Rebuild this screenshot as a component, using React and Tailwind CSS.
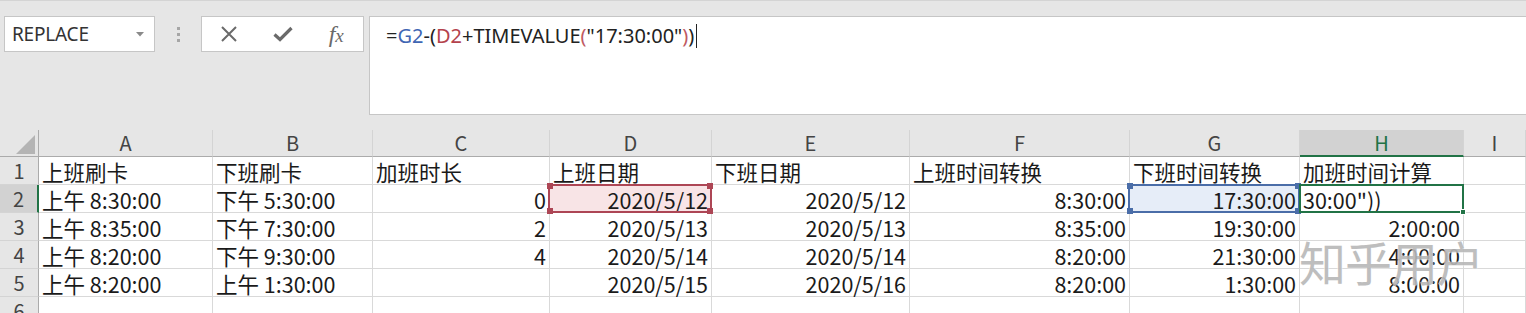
import React from "react";

const COLS = [
  { k: "A", w: 174 },
  { k: "B", w: 160 },
  { k: "C", w: 177 },
  { k: "D", w: 162 },
  { k: "E", w: 198 },
  { k: "F", w: 220 },
  { k: "G", w: 170 },
  { k: "H", w: 164 },
  { k: "I", w: 62 },
];

const ROWS = [
  [["上班刷卡", "l"], ["下班刷卡", "l"], ["加班时长", "l"], ["上班日期", "l"], ["下班日期", "l"], ["上班时间转换", "l"], ["下班时间转换", "l"], ["加班时间计算", "l"], ["", "l"]],
  [["上午 8:30:00", "l"], ["下午 5:30:00", "l"], ["0", "r"], ["2020/5/12", "r"], ["2020/5/12", "r"], ["8:30:00", "r"], ["17:30:00", "r"], ["30:00\"))", "l"], ["", "l"]],
  [["上午 8:35:00", "l"], ["下午 7:30:00", "l"], ["2", "r"], ["2020/5/13", "r"], ["2020/5/13", "r"], ["8:35:00", "r"], ["19:30:00", "r"], ["2:00:00", "r"], ["", "l"]],
  [["上午 8:20:00", "l"], ["下午 9:30:00", "l"], ["4", "r"], ["2020/5/14", "r"], ["2020/5/14", "r"], ["8:20:00", "r"], ["21:30:00", "r"], ["4:00:00", "r"], ["", "l"]],
  [["上午 8:20:00", "l"], ["上午 1:30:00", "l"], ["", "r"], ["2020/5/15", "r"], ["2020/5/16", "r"], ["8:20:00", "r"], ["1:30:00", "r"], ["8:00:00", "r"], ["", "l"]],
  [["", "l"], ["", "l"], ["", "l"], ["", "l"], ["", "l"], ["", "l"], ["", "l"], ["", "l"], ["", "l"]],
];

function Handles({ color }) {
  const base = "absolute w-[6px] h-[6px] z-20";
  return (
    <>
      <div className={`${base} -left-[3px] -top-[3px]`} style={{ background: color }} />
      <div className={`${base} -right-[3px] -top-[3px]`} style={{ background: color }} />
      <div className={`${base} -left-[3px] -bottom-[3px]`} style={{ background: color }} />
      <div className={`${base} -right-[3px] -bottom-[3px]`} style={{ background: color }} />
    </>
  );
}

function Cell({ text, align, w, row, col }) {
  const isD2 = row === 1 && col === 3;
  const isG2 = row === 1 && col === 6;
  const isH2 = row === 1 && col === 7;
  let bg = "bg-white";
  if (isD2) bg = "bg-[#f8e4e6]";
  if (isG2) bg = "bg-[#e6edf8]";
  return (
    <div
      className={`relative h-[28px] shrink-0 border-r border-b border-[#d9d9d9] ${bg} flex items-center ${
        align === "r" ? "justify-end pr-[3px]" : "justify-start pl-[3px]"
      } whitespace-nowrap text-[21.5px] leading-[28px] text-[#1a1a1a]`}
      style={{ width: w }}
    >
      <span className={`relative z-10 pt-[2px] ${isH2 ? "overflow-hidden" : ""}`}>{text}</span>
      {isD2 && (
        <div className="absolute -left-[2px] -top-[1px] -right-[1px] -bottom-[1px] border-2 border-[#ad4655] z-10">
          <Handles color="#ad4655" />
        </div>
      )}
      {isG2 && (
        <div className="absolute -left-[2px] -top-[1px] -right-[1px] -bottom-[1px] border-2 border-[#4a6da8] z-10">
          <Handles color="#4a6da8" />
        </div>
      )}
      {isH2 && (
        <div className="absolute -left-[1px] -top-[1px] -right-[1px] -bottom-[1px] border-2 border-[#217346] z-10">
          <div className="absolute -right-[4px] -bottom-[4px] w-[6px] h-[6px] bg-[#217346] border border-white" />
        </div>
      )}
    </div>
  );
}

export default function App() {
  return (
    <div className="w-[1526px] h-[313px] overflow-hidden bg-white relative font-['Noto_Sans_CJK_SC','Noto_Sans',sans-serif]">
      {/* Toolbar */}
      <div className="h-[130px] bg-[#e6e6e6] border-t border-[#d4d4d4] pt-[15px] flex items-start">
        <div className="ml-[4px] w-[151px] h-[36px] bg-white border border-[#c6c6c6] flex items-center justify-between pl-[7px] pr-[10px] shrink-0">
          <span className="font-['Noto_Sans',sans-serif] text-[19px] text-[#333] leading-none tracking-[-0.2px]">REPLACE</span>
          <svg width="8" height="5" viewBox="0 0 8 5">
            <path d="M0 0 L8 0 L4 4.5 Z" fill="#8a8a8a" />
          </svg>
        </div>
        <div className="w-[46px] h-[36px] flex flex-col items-center justify-center gap-[3px] shrink-0">
          <div className="w-[3px] h-[3px] bg-[#a6a6a6]" />
          <div className="w-[3px] h-[3px] bg-[#a6a6a6]" />
          <div className="w-[3px] h-[3px] bg-[#a6a6a6]" />
        </div>
        <div className="w-[163px] h-[36px] bg-white border border-[#c6c6c6] flex items-center shrink-0">
          <div className="w-[54px] flex items-center justify-center">
            <svg width="18" height="18" viewBox="0 0 18 18">
              <path d="M2 2 L16 16 M16 2 L2 16" stroke="#6a6a6a" strokeWidth="2" fill="none" />
            </svg>
          </div>
          <div className="w-[54px] flex items-center justify-center">
            <svg width="20" height="16" viewBox="0 0 20 16">
              <path d="M1.5 8.5 L7 13.5 L18.5 2" stroke="#6a6a6a" strokeWidth="3.2" fill="none" />
            </svg>
          </div>
          <div className="w-[54px] flex items-center justify-center">
            <span className="font-['Liberation_Serif',serif] italic text-[24px] text-[#6a6a6a] leading-none">
              f<span className="text-[19px]">x</span>
            </span>
          </div>
        </div>
        <div className="ml-[5px] flex-1 h-[99px] bg-white border border-r-0 border-[#c6c6c6] pl-[16px] pt-[5px]">
          <div className="font-['Noto_Sans',sans-serif] text-[20px] leading-[28px] text-[#222] whitespace-nowrap flex items-center">
            <span>=</span>
            <span className="text-[#3f66b3]">G2</span>
            <span>-(</span>
            <span className="text-[#b4424c]">D2</span>
            <span>+TIMEVALUE</span>
            <span className="text-[#c05a62]">(</span>
            <span>"17:30:00"</span>
            <span className="text-[#c05a62]">)</span>
            <span>)</span>
            <span className="inline-block w-[1px] h-[24px] bg-[#222] ml-[2px]" />
          </div>
        </div>
      </div>

      {/* Column headers */}
      <div className="flex h-[27px] bg-[#e6e6e6]">
        <div className="relative w-[39px] h-[27px] shrink-0 border-r border-b border-[#ababab]">
          <svg className="absolute left-[16px] top-[5px]" width="19" height="19" viewBox="0 0 19 19">
            <path d="M19 0 L19 19 L0 19 Z" fill="#b4b4b4" />
          </svg>
        </div>
        {COLS.map((c) => {
          const active = c.k === "H";
          return (
            <div
              key={c.k}
              className={`h-[27px] shrink-0 flex items-center justify-center text-[20px] leading-none border-r border-[#d4d4d4] ${
                active
                  ? "bg-[#d2d2d2] border-b-2 border-b-[#217346] text-[#217346]"
                  : "border-b border-b-[#ababab] text-[#444]"
              }`}
              style={{ width: c.w }}
            >
              {c.k}
            </div>
          );
        })}
      </div>

      {/* Rows */}
      {ROWS.map((r, ri) => {
        const active = ri === 1;
        return (
          <div key={ri} className="flex">
            <div
              className={`w-[39px] h-[28px] shrink-0 flex items-center justify-center text-[20px] leading-none border-b border-[#d4d4d4] ${
                active
                  ? "bg-[#d2d2d2] border-r-2 border-r-[#217346] text-[#444]"
                  : "bg-[#e6e6e6] border-r border-r-[#ababab] text-[#444]"
              }`}
            >
              {ri + 1}
            </div>
            {r.map(([t, a], ci) => (
              <Cell key={ci} text={t} align={a} w={COLS[ci].w} row={ri} col={ci} />
            ))}
          </div>
        );
      })}

      {/* Watermark */}
      <div className="absolute left-[1299px] top-[237px] z-30 text-[47px] leading-none text-[#b8b8b8] opacity-90 tracking-[-1px] [text-shadow:0_0_2px_#ffffff,0_0_1px_#ffffff] pointer-events-none">
        知乎用户
      </div>
    </div>
  );
}
